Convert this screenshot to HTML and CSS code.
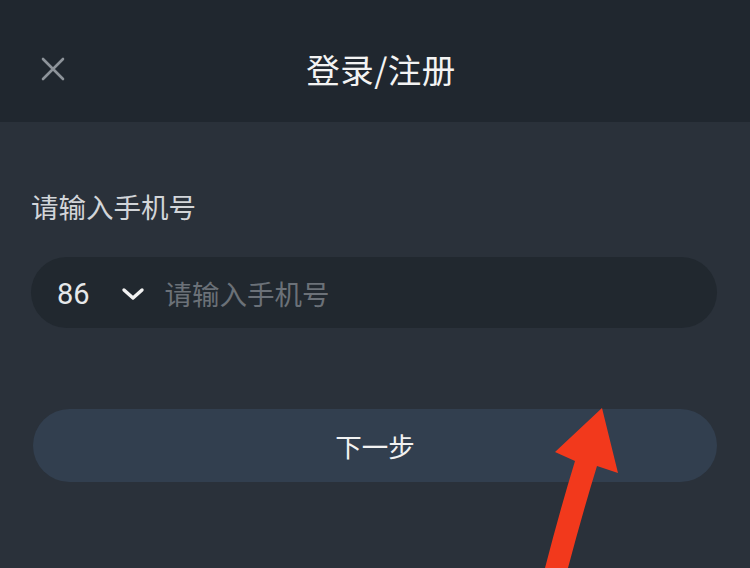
FILE: index.html
```html
<!DOCTYPE html>
<html lang="zh-CN">
<head>
<meta charset="utf-8">
<link rel="stylesheet" href="styles.css">
</head>
<body>
<div class="screen">
  <header class="topbar">
    <div class="close">
      <svg width="26" height="26" viewBox="0 0 26 26"><path d="M3 3 L23 23 M23 3 L3 23" stroke="#8d939a" stroke-width="2.6" stroke-linecap="round" fill="none"/></svg>
    </div>
    <h1 class="title">登录/注册</h1>
    <div></div>
  </header>
  <main class="content">
    <div class="label">请输入手机号</div>
    <div class="field">
      <span class="code">86</span>
      <svg class="chev" width="24" height="14" viewBox="0 0 24 14"><path d="M3 3 L12 11 L21 3" stroke="#f2f2f2" stroke-width="3.4" stroke-linecap="round" stroke-linejoin="round" fill="none"/></svg>
      <span class="placeholder">请输入手机号</span>
    </div>
    <button class="next">下一步</button>
  </main>
  <svg class="arrow" width="750" height="568" viewBox="0 0 750 568">
    <path d="M602 408 L618 473 L597 466 Q582 515 568 568 L545 568 Q560 510 575 461 L555 452 Z" fill="#f2391c"/>
  </svg>
</div>
</body>
</html>
```
FILE: styles.css
```css
html, body {
  margin: 0;
  padding: 0;
}
body {
  background: #2a313a;
  font-family: "Noto Sans CJK SC", "Noto Sans", sans-serif;
}
.screen {
  position: relative;
  width: 750px;
  height: 568px;
  overflow: hidden;
  background: #2a313a;
}
.topbar {
  height: 122px;
  background: #20272f;
  display: grid;
  grid-template-columns: 1fr auto 1fr;
  align-items: center;
  padding-top: 14px;
  box-sizing: border-box;
}
.close {
  padding-left: 40px;
  display: flex;
  align-items: center;
  padding-top: 2px;
}
.title {
  margin: 0;
  font-size: 33.5px;
  font-weight: 400;
  color: #f3f3f3;
  letter-spacing: 0.5px;
  padding-left: 12px;
}
.content {
  padding: 65px 33px 0 31px;
  display: flex;
  flex-direction: column;
}
.label {
  font-size: 27.5px;
  line-height: 38px;
  color: #d2d5d9;
  padding-left: 0;
}
.field {
  margin-top: 32px;
  height: 71px;
  border-radius: 36px;
  background: #21282f;
  display: flex;
  align-items: center;
  padding-left: 26px;
}
.code {
  font-family: "Roboto", "Noto Sans", sans-serif;
  font-size: 29px;
  color: #e6e8ea;
  padding-top: 3px;
}
.chev {
  margin-left: 31px;
  margin-top: 2px;
}
.placeholder {
  margin-left: 20px;
  font-size: 27.5px;
  color: #6b7178;
}
.next {
  margin-top: 81px;
  margin-left: 2px;
  height: 73px;
  border: none;
  border-radius: 37px;
  background: #323f4f;
  color: #f2f2f2;
  font-family: "Noto Sans CJK SC", "Noto Sans", sans-serif;
  font-size: 26.5px;
  padding: 0;
}
.arrow {
  position: absolute;
  left: 0;
  top: 0;
  pointer-events: none;
}
```
